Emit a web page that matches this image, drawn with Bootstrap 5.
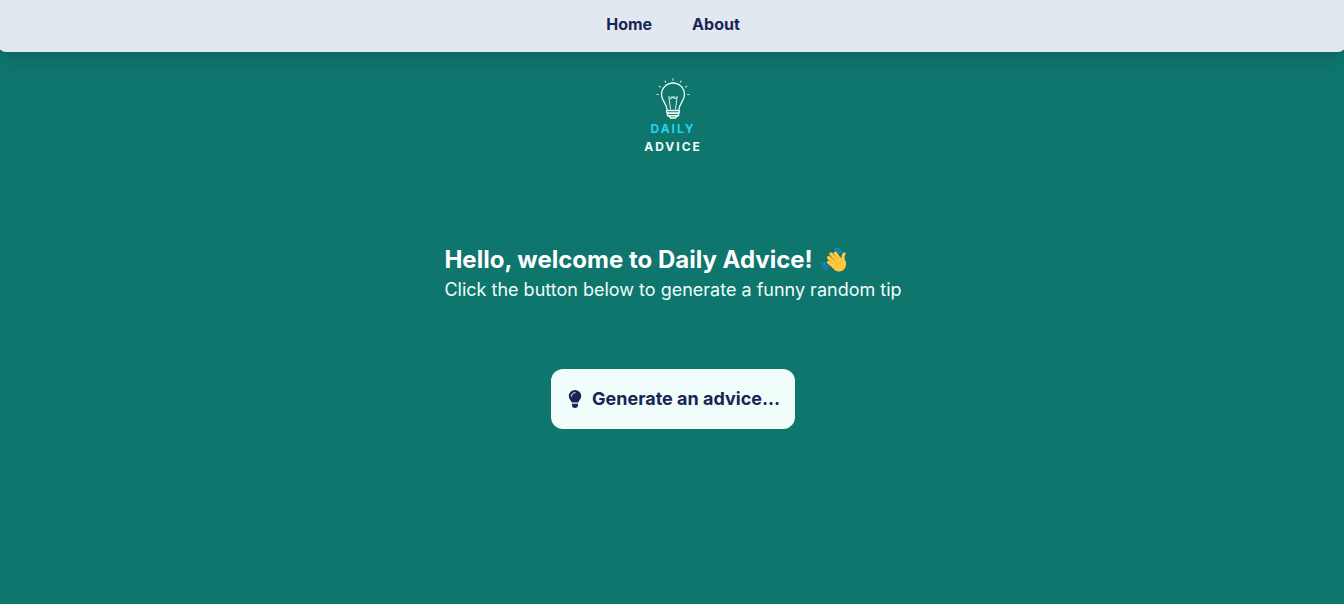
<!DOCTYPE html>
<html lang="en">
<head>
<meta charset="utf-8">
<meta name="viewport" content="width=device-width, initial-scale=1">
<title>Daily Advice</title>
<link rel="stylesheet" href="https://cdn.jsdelivr.net/npm/bootstrap@5.3.0/dist/css/bootstrap.min.css">
<style>
  :root { --navy: #172554; --teal: #0f766e; }
  body { background: var(--teal); font-family: Inter, "Liberation Sans", sans-serif; overflow-x: hidden; }
  .site-nav {
    background: #e2e8f0;
    height: 52px;
    margin: 0 -2px;
    padding: 0 0 4px 2px;
    border-radius: 0 0 8px 8px;
    box-shadow: 0 12px 20px -4px rgba(0,0,0,.12), 0 4px 8px -6px rgba(0,0,0,.1);
  }
  .site-links { gap: 40px; }
  .site-links a { color: var(--navy); font-size: 16px; line-height: 24px; }
  .page-main { padding: 0 16px 0 18px; }
  .brand-mark { margin-top: 26px; color: #f0fdfa; font-size: 12px; line-height: 18px; letter-spacing: 2px; }
  .brand-accent { color: #22d3ee; }
  .brand-mark svg { margin-bottom: 1px; }
  .greeting { margin-top: 88px; color: #fff; }
  .greeting h1 { font-size: 24px; line-height: 32px; }
  .greeting p { font-size: 18px; line-height: 28px; color: #f0fdfa; }
  .advice-btn, .advice-btn:hover {
    margin-top: 65px;
    height: 60px;
    padding: 0 15px;
    border: 0;
    border-radius: 12px;
    background: #f0fdfa;
    color: var(--navy);
    font-size: 18px;
    line-height: 28px;
  }
</style>
</head>
<body>
<header>
  <nav class="site-nav d-flex align-items-center justify-content-center" aria-label="Main">
    <ul class="site-links list-unstyled d-flex mb-0">
      <li><a class="fw-bold text-decoration-none" href="#home">Home</a></li>
      <li><a class="fw-bold text-decoration-none" href="#about">About</a></li>
    </ul>
  </nav>
</header>
<main class="page-main d-flex flex-column align-items-center">
  <div class="brand-mark d-flex flex-column align-items-center fw-bold">
    <svg width="34" height="41" viewBox="0 0 34 41" fill="none" stroke="currentColor" stroke-linecap="round" stroke-linejoin="round" aria-hidden="true">
      <path stroke-width="1.3" d="M11 31.5C11 26 5.5 23 5.5 16.5a11.5 11.5 0 0 1 23 0C28.500 23 23 26 23 31.500"/>
      <path stroke-width=".9" d="M14.500 31 12.800 18.500l2.200 2.500 2-2.500 2 2.500 2.200-2.500L19.500 31M15 18.500l2 1.500 2-1.500"/>
      <path stroke-width="1.400" d="M11 32.500h12q1 1.200 0 2.500H11q-1-1.300 0-2.500zM11.500 35.300h11v2.400h-11zM13 38l1.500 2h5l1.500-2"/>
      <path stroke-width="1.100" opacity=".85" d="M17 .7v1.500M9 3l.7 1.200M25 3l-.7 1.200M3.200 8.300l1.200.7M30.800 8.300l-1.200.7M1 16.500h1.300M33 16.500h-1.300"/>
    </svg>
    <span class="brand-accent">DAILY</span>
    <span>ADVICE</span>
  </div>

  <section class="greeting">
    <h1 class="fw-bold mb-0 d-flex align-items-center gap-2">
      <span>Hello, welcome to Daily Advice!</span>
      <svg width="26" height="26" viewBox="0 0 28 28" role="img" aria-label="Waving hand">
        <g fill="none" stroke="#2f86dc" stroke-width="1.300" stroke-linecap="round">
          <path d="M15 4.300c2.300-.7 4 .5 4.600 2.500M14.800 2.200c3.400-1.200 6 .6 6.700 3.300"/>
          <path d="M3.800 16.500c-.4 2.700 1 4.500 3.500 5M1.500 16.800c-.5 3.700 1.500 6.500 4.600 7"/>
        </g>
        <g fill="none" stroke="#ffc83d" stroke-width="3.700" stroke-linecap="round">
          <path d="m8.300 16.500 5.500 4.500M8.300 11.500l7.500 7M10.800 7.500l7.200 8.500M15.500 6.800l5 7"/>
          <path stroke-width="3.300" d="M24.800 7.500c-1.800 2-1.200 5-.4 8"/>
        </g>
        <path fill="#ffc83d" d="m10 18.500 10.500-8 2.700 3.500 3 .8c.8 1.500 1 3.300.7 5.200-.7 4-4.400 7-8.400 6.300-3.500-.5-6.700-3.800-8.500-7.800z"/>
        <path fill="none" stroke="#e39a25" stroke-width=".5" stroke-linecap="round" d="m9 14.300 3.500 3M10.500 10.300l4 4.300M14.300 8.300l3.500 4.200M23 14c-2 .8-2.800 2-2.500 4"/>
      </svg>
    </h1>
    <p class="mb-0">Click the button below to generate a funny random tip</p>
  </section>

  <button type="button" class="advice-btn btn fw-bold d-inline-flex align-items-center gap-2">
    <svg width="18" height="18" viewBox="0 0 18 18" aria-hidden="true">
      <path fill="currentColor" d="M9 0a6.200 6.200 0 0 0-6.200 6.200c0 2.700 2.200 4 3 6.300h6.400c.8-2.300 3-3.600 3-6.300A6.200 6.200 0 0 0 9 0zM6 13.700h6v1.600c0 1.700-1.200 2.700-3 2.700s-3-1-3-2.700z"/>
      <path fill="none" stroke="#f0fdfa" stroke-width="1" stroke-linecap="round" d="M5.500 6.200C5.500 4 7 2.700 9 2.600"/>
    </svg>
    <span>Generate an advice...</span>
  </button>
</main>
<script src="https://cdn.jsdelivr.net/npm/bootstrap@5.3.0/dist/js/bootstrap.bundle.min.js"></script>
</body>
</html>
